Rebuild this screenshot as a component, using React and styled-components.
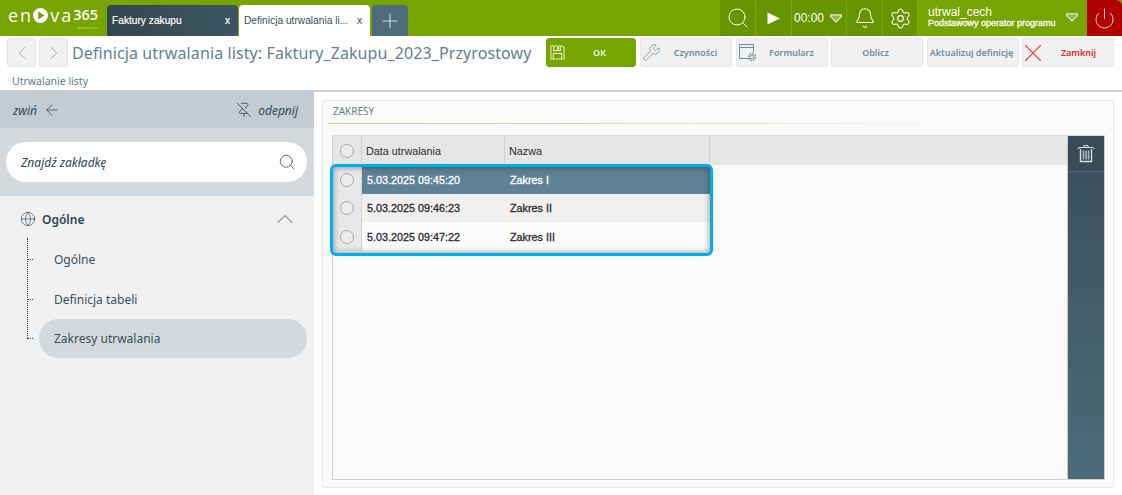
import React from 'react';
import styled, { createGlobalStyle } from 'styled-components';
import { ChevronLeft, ChevronRight, ChevronUp, Search, Bell, Settings, Power, Plus, Wrench, X, Globe, ArrowLeft, PinOff } from 'lucide-react';

const GlobalStyle = createGlobalStyle`
  html, body { margin: 0; padding: 0; background: #fff; }
  body { font-family: "Noto Sans", sans-serif; overflow: hidden; }
  * { box-sizing: border-box; }
`;

const Page = styled.div`
  width: 1122px;
  height: 495px;
  display: flex;
  flex-direction: column;
  overflow: hidden;
`;

const TopBar = styled.div`
  height: 36px;
  background: #76a400;
  display: flex;
  align-items: flex-end;
  flex: none;
`;

const Logo = styled.div`
  width: 107px;
  height: 36px;
  padding: 5px 0 0 8px;
  color: #fff;
  display: flex;
  flex-direction: column;
`;

const LogoMain = styled.div`
  display: flex;
  align-items: center;
  height: 20px;
  font-family: "Open Sans", sans-serif;
  font-size: 18px;
  line-height: 20px;
  letter-spacing: 2px;
  svg { margin: 0 2px 0 0; }
  b { font-weight: 600; font-size: 14.5px; letter-spacing: 0; margin-left: 0; }
`;

const LogoSub = styled.div`
  font-family: "Open Sans", sans-serif;
  font-size: 4px;
  line-height: 5px;
  color: #c9dc93;
  text-align: right;
  padding-right: 9px;
`;

const Tab = styled.div`
  width: 131px;
  height: 31px;
  margin-right: 1px;
  border-radius: 4px 4px 0 0;
  background: ${(p) => (p.$active ? '#fff' : 'linear-gradient(90deg, #33464f, #3e5561)')};
  color: ${(p) => (p.$active ? '#3c4c56' : '#fff')};
  font-family: "Liberation Sans", sans-serif;
  font-size: 10.2px;
  display: flex;
  align-items: center;
  justify-content: space-between;
  padding: 0 8px 1px 5px;
  -webkit-text-stroke: ${(p) => (p.$active ? '0' : '0.2px #fff')};
`;

const TabLabel = styled.span`
  white-space: nowrap;
`;

const AddTab = styled.div`
  width: 36px;
  height: 31px;
  margin-left: 1px;
  border-radius: 4px 4px 0 0;
  background: #4c6b7b;
  color: #d8e0e4;
  display: flex;
  align-items: center;
  justify-content: center;
`;

const TopTools = styled.div`
  margin-left: auto;
  height: 36px;
  display: flex;
`;

const ToolCell = styled.div`
  width: ${(p) => p.$w}px;
  height: 36px;
  background: #669500;
  border-right: 1px solid #7aa61a;
  color: #fff;
  display: flex;
  align-items: center;
  justify-content: center;
  gap: 6px;
`;

const Timer = styled.span`
  font-family: "Liberation Sans", sans-serif;
  font-size: 12px;
  margin-left: -2px;
`;

const UserBox = styled.div`
  width: 169px;
  height: 36px;
  padding: 0 9px 1px 10px;
  color: #fff;
  display: flex;
  justify-content: space-between;
  align-items: center;
  font-family: "Liberation Sans", sans-serif;
`;

const UserName = styled.div`
  font-size: 12px;
  line-height: 12px;
`;

const UserRole = styled.div`
  font-size: 9px;
  line-height: 11px;
  white-space: nowrap;
  -webkit-text-stroke: 0.3px #fff;
`;

const PowerBox = styled.div`
  width: 35px;
  height: 36px;
  background: #b00000;
  color: #f3dcdc;
  display: flex;
  align-items: center;
  justify-content: center;
  border-top-right-radius: 6px;
`;

const Toolbar = styled.div`
  height: 56px;
  flex: none;
  background: #fff;
  border-bottom: 2px solid #c8d0d5;
  padding: 2px 8px 0 7px;
`;

const ToolRow = styled.div`
  display: flex;
  align-items: center;
  height: 29px;
`;

const NavBtn = styled.div`
  width: 29px;
  height: 29px;
  margin-right: 3px;
  background: #f1f1f1;
  border: 1px solid #e3e3e3;
  border-radius: 3px;
  color: #8ea3b1;
  display: flex;
  align-items: center;
  justify-content: center;
`;

const Title = styled.h1`
  margin: 0 0 0 1px;
  width: 474px;
  font-size: 16px;
  font-weight: 400;
  letter-spacing: 0.1px;
  color: #5f8096;
  white-space: nowrap;
`;

const ActionBtn = styled.div`
  width: ${(p) => p.$w || 92}px;
  height: 29px;
  margin-right: ${(p) => p.$gap ?? 4}px;
  background: ${(p) => (p.$primary ? '#76a400' : '#f1f1f1')};
  border: 1px solid ${(p) => (p.$primary ? '#76a400' : '#e6e6e6')};
  border-radius: 3px;
  color: ${(p) => (p.$primary ? '#f2f6e4' : p.$danger ? '#e02a2a' : '#6f8ba0')};
  font-size: 9px;
  font-weight: 600;
  display: flex;
  align-items: center;
  padding: 0 3px 0 0;
  white-space: nowrap;
  &:last-child { margin-right: 0; }
`;

const ActionIcon = styled.span`
  width: 20px;
  height: 20px;
  flex: none;
  display: flex;
  align-items: center;
  justify-content: center;
  color: ${(p) => p.$color || '#6f8ba0'};
  svg { flex: none; }
`;

const ActionLabel = styled.span`
  flex: 1;
  text-align: center;
  padding-left: ${(p) => p.$shift || 0}px;
`;

const Crumb = styled.div`
  margin: 6px 0 0 5px;
  font-size: 10.5px;
  line-height: 16px;
  color: #5f7a8c;
`;

const Body = styled.div`
  flex: 1;
  display: flex;
  min-height: 0;
`;

const Sidebar = styled.aside`
  width: 314px;
  flex: none;
  background: #f1f1f1;
  display: flex;
  flex-direction: column;
`;

const SideHeader = styled.div`
  height: 36px;
  background: #c3ccd3;
  padding: 0 16px 0 13px;
  display: flex;
  align-items: center;
  justify-content: space-between;
  font-size: 12px;
  font-style: italic;
  color: #2f4653;
`;

const SideLink = styled.span`
  display: flex;
  align-items: center;
  gap: 6px;
`;

const SearchZone = styled.div`
  height: 68px;
  background: #d3d9dc;
  padding: 14px 7px 0 6px;
`;

const SearchBox = styled.div`
  height: 40px;
  background: #fff;
  border-radius: 20px;
  padding: 0 11px 0 15px;
  display: flex;
  align-items: center;
  justify-content: space-between;
  font-size: 12px;
  font-style: italic;
  color: #2f4653;
`;

const GroupRow = styled.div`
  display: flex;
  align-items: center;
  height: 24px;
  margin-top: 11px;
  padding: 0 15px 0 20px;
  font-size: 12px;
  font-weight: 600;
  color: #2f4653;
  gap: 6px;
  svg { flex: none; }
  svg:last-child { margin-left: auto; color: #6d7d88; }
`;

const Tree = styled.div`
  position: relative;
  margin: 9px 7px 0 39px;
`;

const TreeLine = styled.div`
  position: absolute;
  left: -12px;
  top: -2px;
  height: 100px;
  border-left: 1px dotted #33464f;
`;

const TreeItem = styled.div`
  position: relative;
  height: 39px;
  margin-bottom: ${(p) => (p.$last ? 0 : '0.5px')};
  border-radius: 20px;
  padding-left: 15px;
  display: flex;
  align-items: center;
  font-size: 12px;
  color: #36505f;
  background: ${(p) => (p.$active ? '#d3d9dc' : 'transparent')};
  &::before {
    content: '';
    position: absolute;
    left: -12px;
    top: 19px;
    width: 6px;
    border-top: 1px dotted #33464f;
  }
`;

const Main = styled.main`
  flex: 1;
  padding: 8px 8px 7px 8px;
  background: #fff;
  display: flex;
`;

const Panel = styled.section`
  flex: 1;
  background: #fafafa;
  border: 1px solid #e6e6e6;
  border-radius: 3px;
  padding: 0 8px 7px 9px;
  display: flex;
  flex-direction: column;
`;

const PanelTitle = styled.div`
  height: 23px;
  margin: 0 0 11px -4px;
  padding: 4px 0 0 5px;
  font-size: 10px;
  line-height: 13px;
  color: #6a7a84;
  border-bottom: 1px solid;
  border-image: linear-gradient(90deg, #bdd08c, #dbe4c2 45%, #fafafa 85%) 1;
`;

const GridWrap = styled.div`
  position: relative;
  flex: 1;
  display: flex;
  border: 1px solid #d0d0d0;
  border-top-color: #dcdcdc;
  background: #fafafa;
`;

const GridBody = styled.div`
  flex: 1;
  font-family: "Liberation Sans", sans-serif;
  font-size: 10.8px;
`;

const Row = styled.div`
  display: grid;
  grid-template-columns: ${(p) => (p.$head ? '29px 143px 205px 1fr' : '29px 143px 205px')};
  width: ${(p) => (p.$head ? '100%' : '377px')};
  height: ${(p) => p.$h}px;
  background: ${(p) => p.$bg};
  color: ${(p) => p.$color || '#2a2a2a'};
  -webkit-text-stroke: ${(p) => (p.$head ? '0' : '0.3px')};
  align-items: stretch;
`;

const Cell = styled.div`
  display: flex;
  align-items: center;
  padding-left: ${(p) => (p.$head ? 4 : 5)}px;
  border-right: ${(p) => (p.$head ? '1px solid #d2d2d2' : '0')};
  white-space: nowrap;
  &:last-child { border-right: 0; }
`;

const CheckCell = styled.div`
  background: ${(p) => (p.$head ? '#e6e6e6' : '#e8e8e8')};
  border-right: 1px solid #d2d2d2;
  display: flex;
  align-items: center;
  justify-content: center;
`;

const Radio = styled.span`
  width: 14px;
  height: 14px;
  border-radius: 50%;
  border: 1px solid #a8a8a8;
  background: #ececec;
`;

const Highlight = styled.div`
  position: absolute;
  left: -3px;
  top: 28px;
  width: 383px;
  height: 92px;
  border: 3px solid #00aeef;
  border-radius: 6px;
  box-shadow: inset 0 0 6px rgba(0, 0, 0, 0.45);
  pointer-events: none;
`;

const Rail = styled.div`
  width: 37px;
  flex: none;
  background: linear-gradient(180deg, #3a4e5a, #4c6b79);
  border-left: 1px solid #c8c8c8;
  border-radius: 2px 2px 0 0;
`;

const RailBtn = styled.div`
  height: 36px;
  background: #384b57;
  border-bottom: 1px solid #4c6b79;
  color: #d6dde0;
  display: flex;
  align-items: center;
  justify-content: center;
`;

const rows = [
  { date: '5.03.2025 09:45:20', name: 'Zakres I', bg: '#5f8296', color: '#fff', h: 29 },
  { date: '5.03.2025 09:46:23', name: 'Zakres II', bg: '#f0f0f0', h: 28 },
  { date: '5.03.2025 09:47:22', name: 'Zakres III', bg: '#fbfbfb', h: 29 },
];

const TrashIcon = () => (
  <svg width="18" height="19" viewBox="0 0 18 19" fill="none" stroke="currentColor">
    <path d="M7 3V1.5h4V3" strokeWidth="1" />
    <path d="M0.5 4.5l2 -1h13l2 1" strokeWidth="1.2" />
    <path d="M3.5 5v12.5h11V5" strokeWidth="1.4" />
    <path d="M6.5 6.5v9M9 6.5v9M11.5 6.5v9" strokeWidth="1.5" opacity="0.75" />
  </svg>
);

const FormIcon = () => (
  <svg width="19" height="19" viewBox="0 0 19 19" fill="none" stroke="currentColor" strokeWidth="1">
    <path d="M13 15.5H1.5V1.5h14v8" />
    <path d="M1.5 4.5h14" />
    <circle cx="14" cy="14" r="2" />
    <circle cx="14" cy="14" r="3.6" strokeDasharray="1.6 1.2" strokeWidth="1.4" />
  </svg>
);

const SaveIcon = () => (
  <svg width="15" height="15" viewBox="0 0 16 16" fill="none" stroke="currentColor" strokeWidth="1.1">
    <path d="M1 1h12l2 2v12H1z" />
    <path d="M4 1v5h7V1" />
    <path d="M8.5 2v3" strokeWidth="2" />
    <path d="M3.5 15V9h9v6" />
  </svg>
);

const PlayMark = () => (
  <svg width="15" height="15" viewBox="0 0 15 15">
    <circle cx="7.5" cy="7.5" r="7.5" fill="#fff" />
    <path d="M5.2 3.5l6.3 4-6.3 4z" fill="#76a400" />
  </svg>
);

const PlayIcon = () => (
  <svg width="13" height="13" viewBox="0 0 13 13">
    <path d="M0.5 0.5L13 6.5L0.5 12.5z" fill="#fff" />
  </svg>
);

const CaretIcon = () => (
  <svg width="12" height="9" viewBox="0 0 12 9" style={{ flex: 'none' }}>
    <path d="M0.8 0.8H11.2V2.8L6 8L0.8 2.8z" fill="#97b356" stroke="#e4ecd0" strokeWidth="1.2" />
  </svg>
);

const App = () => (
  <Page>
    <GlobalStyle />
    <TopBar>
      <Logo>
        <LogoMain>en<PlayMark />va<b>365</b></LogoMain>
        <LogoSub>dla biznesu</LogoSub>
      </Logo>
      <Tab>
        <TabLabel>Faktury zakupu</TabLabel>
        <span>x</span>
      </Tab>
      <Tab $active>
        <TabLabel>Definicja utrwalania li...</TabLabel>
        <span>x</span>
      </Tab>
      <AddTab><Plus size={24} strokeWidth={1} /></AddTab>
      <TopTools>
        <ToolCell $w={36}><Search size={24} strokeWidth={1} /></ToolCell>
        <ToolCell $w={36}><PlayIcon /></ToolCell>
        <ToolCell $w={55}><Timer>00:00</Timer><CaretIcon /></ToolCell>
        <ToolCell $w={36}><Bell size={22} strokeWidth={1.1} /></ToolCell>
        <ToolCell $w={35}><Settings size={23} strokeWidth={1.1} /></ToolCell>
        <UserBox>
          <div>
            <UserName>utrwal_cech</UserName>
            <UserRole>Podstawowy operator programu</UserRole>
          </div>
          <CaretIcon />
        </UserBox>
        <PowerBox><Power size={23} strokeWidth={1} /></PowerBox>
      </TopTools>
    </TopBar>
    <Toolbar>
      <ToolRow>
        <NavBtn><ChevronLeft size={22} strokeWidth={1} /></NavBtn>
        <NavBtn><ChevronRight size={22} strokeWidth={1} /></NavBtn>
        <Title>Definicja utrwalania listy: Faktury_Zakupu_2023_Przyrostowy</Title>
        <ActionBtn $primary $w={90}>
          <ActionIcon $color="#e6eecb"><SaveIcon /></ActionIcon>
          <ActionLabel>OK</ActionLabel>
        </ActionBtn>
        <ActionBtn>
          <ActionIcon><Wrench size={19} strokeWidth={1} /></ActionIcon>
          <ActionLabel $shift={2}>Czynności</ActionLabel>
        </ActionBtn>
        <ActionBtn $gap={3}>
          <ActionIcon><FormIcon /></ActionIcon>
          <ActionLabel $shift={2}>Formularz</ActionLabel>
        </ActionBtn>
        <ActionBtn><ActionLabel>Oblicz</ActionLabel></ActionBtn>
        <ActionBtn $gap={3}><ActionLabel>Aktualizuj definicję</ActionLabel></ActionBtn>
        <ActionBtn $danger>
          <ActionIcon $color="#e8453c"><X size={30} strokeWidth={0.9} /></ActionIcon>
          <ActionLabel $shift={4}>Zamknij</ActionLabel>
        </ActionBtn>
      </ToolRow>
      <Crumb>Utrwalanie listy</Crumb>
    </Toolbar>
    <Body>
      <Sidebar>
        <SideHeader>
          <SideLink>zwiń <ArrowLeft size={18} strokeWidth={1} /></SideLink>
          <SideLink><PinOff size={16} strokeWidth={1.2} /> odepnij</SideLink>
        </SideHeader>
        <SearchZone>
          <SearchBox>
            Znajdź zakładkę
            <Search size={18} strokeWidth={1} />
          </SearchBox>
        </SearchZone>
        <GroupRow>
          <Globe size={16} strokeWidth={1} /> Ogólne
          <ChevronUp size={28} strokeWidth={0.9} />
        </GroupRow>
        <Tree>
          <TreeLine />
          <TreeItem>Ogólne</TreeItem>
          <TreeItem>Definicja tabeli</TreeItem>
          <TreeItem $active $last>Zakresy utrwalania</TreeItem>
        </Tree>
      </Sidebar>
      <Main>
        <Panel>
          <PanelTitle>ZAKRESY</PanelTitle>
          <GridWrap>
            <GridBody>
              <Row $head $h={29} $bg="#e6e6e6">
                <CheckCell $head><Radio /></CheckCell>
                <Cell $head>Data utrwalania</Cell>
                <Cell $head>Nazwa</Cell>
                <Cell $head />
              </Row>
              {rows.map((row) => (
                <Row key={row.date} $h={row.h} $bg={row.bg} $color={row.color}>
                  <CheckCell><Radio /></CheckCell>
                  <Cell>{row.date}</Cell>
                  <Cell>{row.name}</Cell>
                </Row>
              ))}
            </GridBody>
            <Rail>
              <RailBtn><TrashIcon /></RailBtn>
            </Rail>
            <Highlight />
          </GridWrap>
        </Panel>
      </Main>
    </Body>
  </Page>
);

export default App;
